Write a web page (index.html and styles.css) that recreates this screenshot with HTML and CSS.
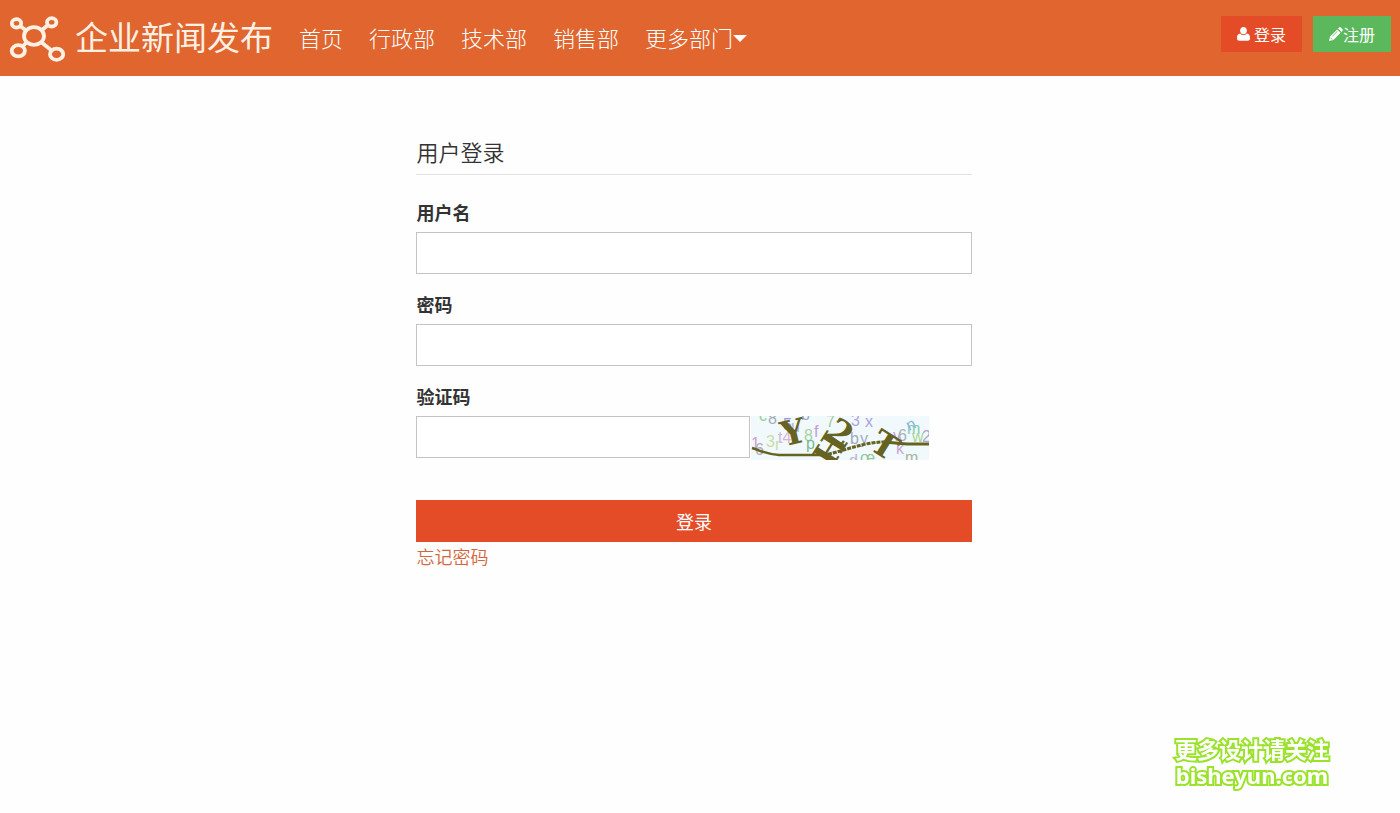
FILE: index.html
```html
<!DOCTYPE html>
<html lang="zh-CN">
<head>
  <meta charset="UTF-8">
  <meta name="viewport" content="width=device-width, initial-scale=1.0">
  <title>用户登录</title>
  <link rel="stylesheet" href="styles.css">
</head>
<body>
  <header class="header">
    <a class="logo" href="#">
      <svg class="logo-icon" viewBox="0 0 56 48" width="56" height="48" aria-hidden="true">
        <g fill="none" stroke="#fff0e4" stroke-width="3.8">
          <path d="M11 12L18 17M33 16L39 11M18 28L13 33M32 28L42 36"/>
          <ellipse cx="25" cy="22" rx="10" ry="8.800"/>
          <ellipse cx="7.500" cy="9.300" rx="4.700" ry="4.200"/>
          <ellipse cx="42.700" cy="8.300" rx="4.700" ry="4.200"/>
          <ellipse cx="9.300" cy="36.800" rx="6.600" ry="5.600"/>
          <ellipse cx="47.600" cy="40.200" rx="6.600" ry="5.600"/>
        </g>
      </svg>
      <span>企业新闻发布</span>
    </a>
    <nav class="nav">
      <a href="#">首页</a>
      <a href="#">行政部</a>
      <a href="#">技术部</a>
      <a href="#">销售部</a>
      <a class="nav-more" href="#">更多部门<span class="caret"></span></a>
    </nav>
    <div class="user-buttons">
      <button type="button" class="btn btn-login">
        <svg viewBox="0 0 13 14" width="13" height="14" aria-hidden="true">
          <path fill="#fff" d="M6.500 0C8.500 0 9.900 1.500 9.900 3.600S8.500 7.300 6.500 7.300 3.100 5.700 3.100 3.600 4.500 0 6.500 0zM3.200 6.600C4.900 8.600 8.100 8.600 9.800 6.600 12.200 6.900 13 8.700 13 11.200 13 13 12 13.700 10.500 13.700H2.500C1 13.700 0 13 0 11.200 0 8.700.8 6.900 3.200 6.600z"/>
        </svg>
        登录
      </button>
      <button type="button" class="btn btn-register">
        <svg viewBox="0 0 14 14" width="14" height="14" aria-hidden="true">
          <path fill="#fff" d="M0 14L1 9.600 8.200 2.400 11.600 5.800 4.400 13zM9 1.600L10.200.4Q11 -.2 11.800.5L13.500 2.200Q14.200 3 13.600 3.800L12.400 5z"/>
          <path fill="none" stroke="#5cb85c" stroke-width=".8" d="M3.400 9.200L8.600 4M1.400 10.600L3.400 12.600"/>
        </svg>注册
      </button>
    </div>
  </header>

  <main class="main">
    <form class="login-form">
      <h1>用户登录</h1>
      <div class="field">
        <label for="username">用户名</label>
        <input type="text" id="username">
      </div>
      <div class="field">
        <label for="password">密码</label>
        <input type="password" id="password">
      </div>
      <div class="field">
        <label for="captcha">验证码</label>
        <div class="captcha-row">
          <input type="text" id="captcha">
          <svg class="captcha" viewBox="0 0 178 44" width="178" height="44" role="img" aria-label="验证码图片">
            <rect width="178" height="44" fill="#f1f9fd"/>
            <!-- шум -->
            <g class="captcha-noise">
              <text x="8" y="5" fill="#93cf9c">c</text>
              <text x="17" y="8" fill="#a2adb5">8</text>
              <text x="32" y="14" fill="#9795dc">5</text>
              <text x="50" y="4" fill="#9fa8c6">b</text>
              <text x="0" y="33" fill="#caa2d4">1</text>
              <text x="15" y="31" fill="#c9dfa6">3</text>
              <text x="4" y="39" fill="#b3acb5">6</text>
              <text x="24" y="34" fill="#c6deaa">r</text>
              <text x="27" y="27" fill="#d5b6d8">t4</text>
              <text x="40" y="16" fill="#b8b1df">u</text>
              <text x="53" y="25" fill="#aad1a0">8</text>
              <text x="63" y="21" fill="#c69bd8">f</text>
              <text x="55" y="33" fill="#79b995">p</text>
              <text x="75" y="11" fill="#a6c79a">7</text>
              <text x="100" y="10" fill="#b0a9dc">3</text>
              <text x="114" y="11" fill="#aaa3df">x</text>
              <text x="99" y="28" fill="#9eabba">b</text>
              <text x="109" y="28" fill="#9eabba">y</text>
              <text x="142" y="25" fill="#c8a2ce">v</text>
              <text x="147" y="25" fill="#aab5b8">6</text>
              <text x="145" y="38" fill="#c6a7d8">k</text>
              <text x="156" y="18" fill="#82ccb2">m</text>
              <text x="161" y="26" fill="#a9d698">w</text>
              <text x="171" y="26" fill="#a8a9c8">2</text>
              <text x="98" y="50" fill="#bbb4cd">d</text>
              <text x="109" y="47" fill="#94c79c">œ</text>
              <text x="154" y="47" fill="#a7b49b">m</text>
              <text transform="translate(158 15) rotate(-25)" fill="#8bb8dc">n</text>
            </g>
            <g fill="none" stroke="#666322">
              <path stroke-width="2.500" d="M1 32C8 34 14 38 28 39H73"/>
              <path stroke-width="3" stroke-dasharray="4 1" d="M72 39C92 36 110 26 134 26"/>
              <path stroke-width="3" d="M133 26L156 28H178"/>
            </g>
            <g class="captcha-code">
              <text transform="translate(42 16) rotate(-13)" x="0" y="12" text-anchor="middle">Y</text>
              <text transform="translate(90 16) rotate(35)" x="0" y="13" text-anchor="middle">2</text>
              <text transform="translate(79 33) rotate(-58)" x="0" y="12" text-anchor="middle">H</text>
              <text transform="translate(134 29) rotate(32)" x="0" y="12" text-anchor="middle">T</text>
            </g>
          </svg>
        </div>
      </div>
      <button type="submit" class="submit">登录</button>
      <a class="forgot" href="#">忘记密码</a>
    </form>
  </main>

  <div class="watermark">更多设计请关注<br>bisheyun.com</div>
</body>
</html>
```
FILE: styles.css
```css
* {
  box-sizing: border-box;
}

body {
  margin: 0;
  background: #fefefe;
  color: #333;
  font-family: 'Noto Sans', 'Noto Sans CJK SC', sans-serif;
  font-size: 18px;
  line-height: 26px;
}

a {
  text-decoration: none;
}

button,
input {
  font-family: inherit;
  font-size: inherit;
}

/* Header */
.header {
  display: flex;
  align-items: center;
  height: 76px;
  padding: 0 9px;
  background: #e0652f;
}

.logo {
  display: flex;
  align-items: center;
  gap: 10px;
  color: #fff0e4;
  font-size: 33px;
  line-height: 48px;
  white-space: nowrap;
}

.nav {
  display: flex;
  gap: 26px;
  margin-left: 26px;
  font-size: 22px;
  font-weight: 300;
  line-height: 32px;
  white-space: nowrap;
}

.nav a {
  color: #fff;
}

.nav-more {
  display: flex;
  align-items: center;
}

.caret {
  border: 7px solid transparent;
  border-top-color: #fff;
  border-bottom: 0;
}

.user-buttons {
  display: flex;
  gap: 11px;
  margin-left: auto;
  padding-bottom: 8px;
}

.btn {
  display: flex;
  align-items: center;
  gap: 4px;
  height: 36px;
  padding: 0 16px;
  border: 0;
  color: #fff;
  font-size: 16px;
  white-space: nowrap;
  cursor: pointer;
}

.btn-login {
  background: #e44c27;
}

.btn-register {
  gap: 0;
  background: #5cb85c;
}

/* Login form */
.main {
  padding: 60px 12px 60px 0;
}

.login-form {
  width: 40%;
  margin: 0 auto;
}

.login-form h1 {
  margin: 0 0 25px;
  padding-bottom: 6px;
  border-bottom: 1px solid #e2e2e2;
  font-size: 22px;
  font-weight: 350;
  line-height: 32px;
}

.field {
  margin-bottom: 18px;
}

.field label {
  display: block;
  margin-bottom: 6px;
  font-weight: bold;
}

.field input {
  display: block;
  width: 100%;
  height: 42px;
  padding: 0 10px;
  border: 1px solid #c4c4c4;
  background: #fff;
}

.captcha-row {
  display: flex;
}

.captcha-row input {
  width: 60%;
}

.captcha {
  flex: none;
  margin-left: 1px;
}

.captcha-noise {
  font-family: 'Liberation Sans', sans-serif;
  font-size: 16px;
}

.captcha-code {
  fill: #666322;
  font-family: 'DejaVu Serif', serif;
  font-size: 34px;
  font-weight: bold;
}

.submit {
  display: block;
  width: 100%;
  height: 42px;
  margin-top: 40px;
  border: 0;
  background: #e44c27;
  color: #fff;
  cursor: pointer;
}

.forgot {
  display: inline-block;
  margin-top: 2px;
  color: #d2663c;
  font-weight: 350;
}

/* Watermark */
.watermark {
  position: fixed;
  right: 71px;
  bottom: 25px;
  color: #fff;
  font-size: 22px;
  font-weight: bold;
  text-align: center;
  -webkit-text-stroke: 4px #9be22d;
  paint-order: stroke fill;
}
```
